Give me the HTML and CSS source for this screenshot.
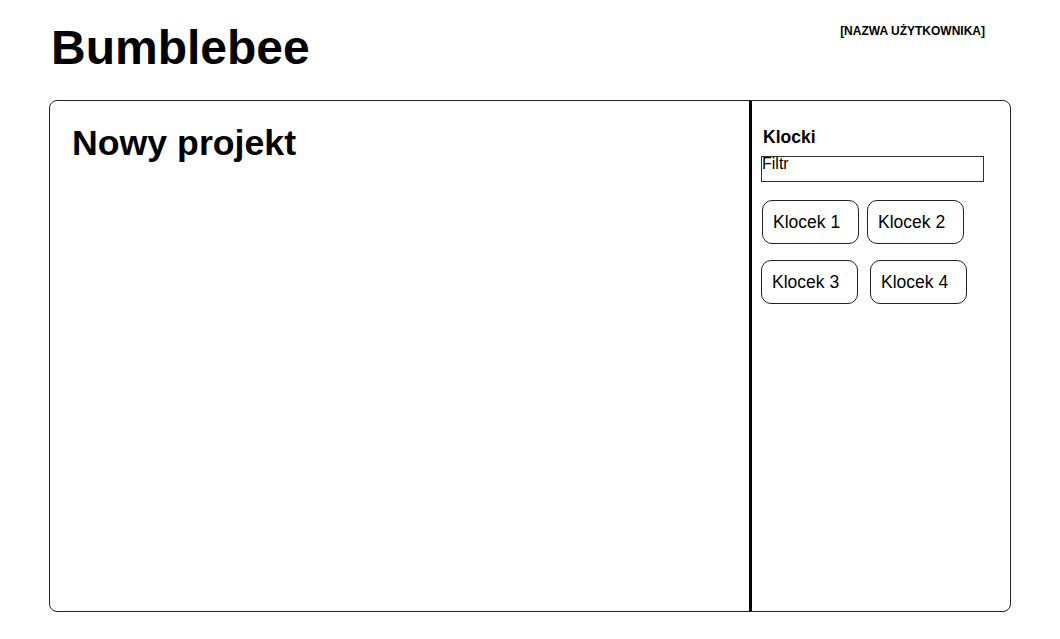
FILE: index.html
```html
<!DOCTYPE html>
<html lang="pl">
<head>
<meta charset="utf-8">
<title>Bumblebee</title>
<link rel="stylesheet" href="styles.css">
</head>
<body>
<header class="header">
  <h1 class="logo">Bumblebee</h1>
  <div class="user">[NAZWA UŻYTKOWNIKA]</div>
</header>
<main class="frame">
  <section class="canvas">
    <h2 class="project-title">Nowy projekt</h2>
  </section>
  <aside class="sidebar">
    <h3 class="sidebar-title">Klocki</h3>
    <div class="filter">Filtr</div>
    <div class="blocks">
      <div class="row row-1">
        <div class="block">Klocek 1</div>
        <div class="block">Klocek 2</div>
      </div>
      <div class="row row-2">
        <div class="block">Klocek 3</div>
        <div class="block">Klocek 4</div>
      </div>
    </div>
  </aside>
</main>
</body>
</html>
```
FILE: styles.css
```css
html, body {
  margin: 0;
  padding: 0;
  background: #fff;
}
body {
  font-family: "Liberation Sans", Arial, sans-serif;
  color: #000;
  width: 1060px;
  height: 639px;
  overflow: hidden;
}
.header {
  box-sizing: border-box;
  height: 100px;
  padding: 24px 75px 0 51px;
  display: flex;
  justify-content: space-between;
  align-items: flex-start;
}
.logo {
  margin: 0;
  font-size: 48px;
  line-height: 48px;
  font-weight: bold;
}
.user {
  margin-top: 1px;
  font-size: 12px;
  line-height: 12px;
  font-weight: bold;
}
.frame {
  box-sizing: border-box;
  margin-left: 49px;
  width: 962px;
  height: 512px;
  border: 1px solid #222;
  border-radius: 8px;
  display: flex;
}
.canvas {
  box-sizing: border-box;
  width: 702px;
  border-right: 3px solid #000;
  padding: 24px 0 0 22px;
}
.project-title {
  margin: 0;
  font-size: 35.7px;
  line-height: 36px;
  font-weight: bold;
}
.sidebar {
  flex: 1;
  padding: 28px 0 0 9px;
}
.sidebar-title {
  margin: 0 0 0 2px;
  font-size: 17.5px;
  line-height: 17px;
  font-weight: bold;
}
.filter {
  box-sizing: border-box;
  margin-top: 10px;
  width: 223px;
  height: 26px;
  border: 1px solid #333;
  font-size: 16px;
  line-height: 13px;
}
.blocks {
  margin-top: 18px;
  display: flex;
  flex-direction: column;
  gap: 16px;
}
.row {
  display: flex;
}
.row-1 {
  margin-left: 1px;
  gap: 8px;
}
.row-2 {
  gap: 12px;
}
.block {
  box-sizing: border-box;
  width: 97px;
  height: 44px;
  border: 1px solid #222;
  border-radius: 10px;
  padding-left: 10px;
  display: flex;
  align-items: center;
  font-size: 17.5px;
}
```
